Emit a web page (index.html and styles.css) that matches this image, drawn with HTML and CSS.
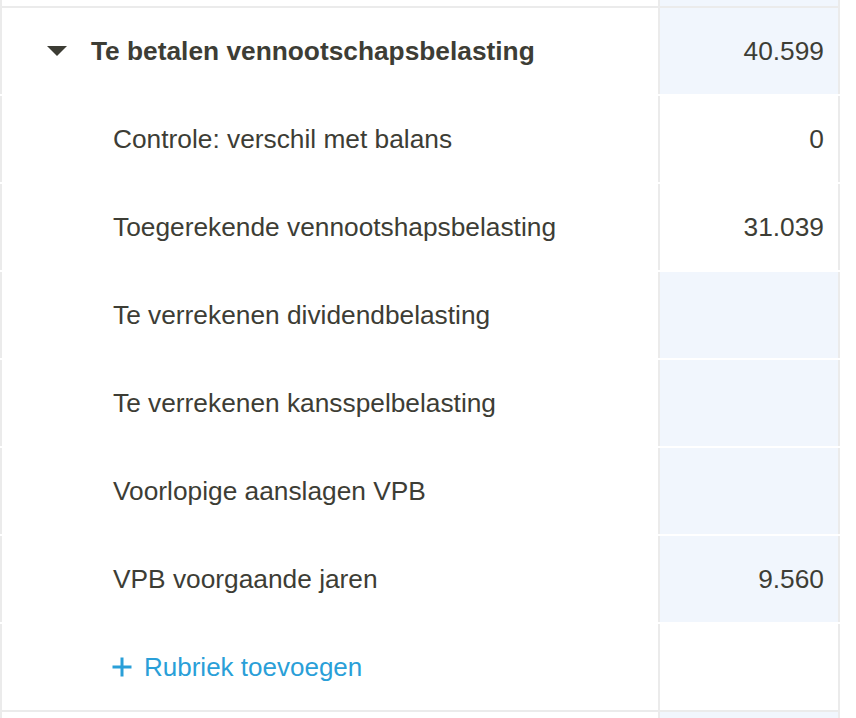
FILE: index.html
```html
<!DOCTYPE html>
<html lang="nl">
<head>
<meta charset="utf-8">
<title>Te betalen vennootschapsbelasting</title>
<link rel="stylesheet" href="styles.css">
</head>
<body>
<div class="table">
  <div class="row row-partial">
    <div class="cell-label"></div>
    <div class="cell-value is-input"></div>
  </div>
  <div class="section">
    <div class="row">
      <div class="cell-label header">
        <svg class="caret" width="20" height="10" viewBox="0 0 20 10" aria-hidden="true"><polygon points="0,0 20,0 10,10" fill="#3c3c34"/></svg>
        <span>Te betalen vennootschapsbelasting</span>
      </div>
      <div class="cell-value is-input">40.599</div>
    </div>
    <div class="row">
      <div class="cell-label sub">Controle: verschil met balans</div>
      <div class="cell-value">0</div>
    </div>
    <div class="row">
      <div class="cell-label sub">Toegerekende vennootshapsbelasting</div>
      <div class="cell-value">31.039</div>
    </div>
    <div class="row">
      <div class="cell-label sub">Te verrekenen dividendbelasting</div>
      <div class="cell-value is-input"></div>
    </div>
    <div class="row">
      <div class="cell-label sub">Te verrekenen kansspelbelasting</div>
      <div class="cell-value is-input"></div>
    </div>
    <div class="row">
      <div class="cell-label sub">Voorlopige aanslagen VPB</div>
      <div class="cell-value is-input"></div>
    </div>
    <div class="row">
      <div class="cell-label sub">VPB voorgaande jaren</div>
      <div class="cell-value is-input">9.560</div>
    </div>
    <div class="row">
      <div class="cell-label add">
        <svg class="plus" width="20" height="20" viewBox="0 0 20 20" aria-hidden="true"><path d="M10 0.5V19.5M0.5 10H19.5" stroke="#2a9fd8" stroke-width="3" fill="none"/></svg>
        <span>Rubriek toevoegen</span>
      </div>
      <div class="cell-value"></div>
    </div>
  </div>
  <div class="row row-partial">
    <div class="cell-label"></div>
    <div class="cell-value is-input"></div>
  </div>
</div>
</body>
</html>
```
FILE: styles.css
```css
html, body {
  margin: 0;
  padding: 0;
  background: #ffffff;
}

body {
  font-family: "Liberation Sans", Arial, Helvetica, sans-serif;
  color: #3d3d35;
  font-size: 26.3px;
  overflow: hidden;
  height: 718px;
}

.table {
  width: 840px;
  display: flex;
  flex-direction: column;
}

.section {
  border-top: 2px solid #ebebeb;
  border-bottom: 2px solid #ebebeb;
  display: flex;
  flex-direction: column;
  gap: 2px;
}

.row {
  display: grid;
  grid-template-columns: 658px 182px;
  height: 86px;
}

.row-partial {
  height: 6px;
}

.cell-label {
  border-left: 2px solid #ebebeb;
  display: flex;
  align-items: center;
  white-space: nowrap;
}

.cell-value {
  border-left: 2px solid #ebebeb;
  border-right: 2px solid #ebebeb;
  display: flex;
  align-items: center;
  justify-content: flex-end;
  padding-right: 14px;
}

.cell-value.is-input {
  background: #f1f6fd;
}

.header {
  padding-left: 45px;
  gap: 24px;
  font-weight: bold;
}

.caret {
  display: block;
  flex: none;
}

.sub {
  padding-left: 111px;
}

.add {
  padding-left: 110px;
  gap: 12px;
  color: #2a9fd8;
  font-size: 26px;
}

.plus {
  display: block;
  flex: none;
}
```
